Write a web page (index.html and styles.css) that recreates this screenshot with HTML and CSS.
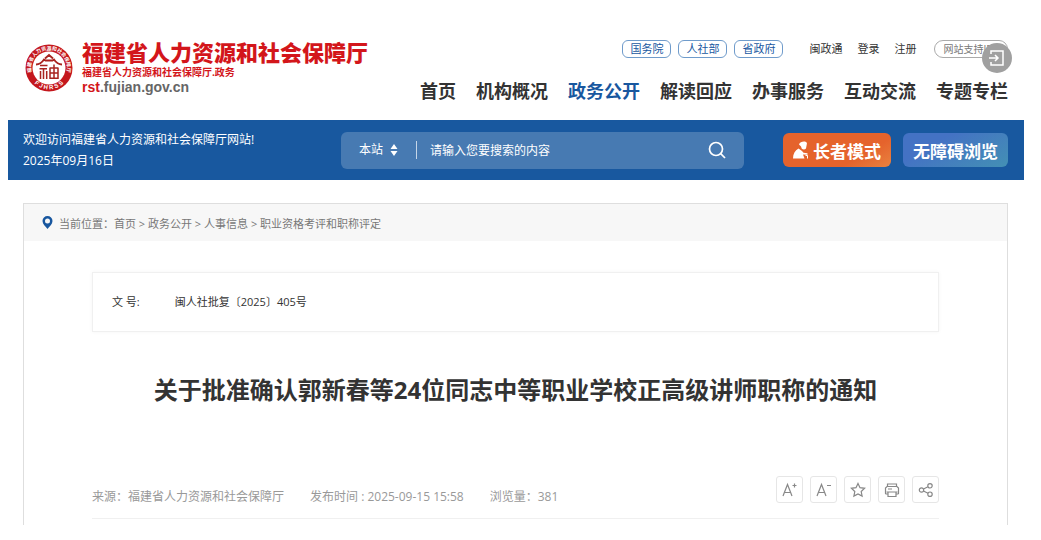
FILE: index.html
```html
<!DOCTYPE html>
<html lang="zh-CN">
<head>
    <meta charset="UTF-8">
    <meta name="viewport" content="width=device-width, initial-scale=1.0">
    <title>福建省人力资源和社会保障厅</title>
    <link rel="stylesheet" href="styles.css">
</head>
<body>

    <div class="page">
        <!-- Logo, quick links and main navigation -->
        <header class="header">
            <a class="logo" href="#">
                <svg class="seal" viewBox="0 0 48 48" aria-hidden="true">
                    <defs>
                        <path id="ring-top" d="M7.500 31 A18 18 0 1 1 40.500 31"/>
                        <path id="ring-bottom" d="M4.500 33 A21.600 21.600 0 0 0 43.500 33"/>
                    </defs>
                    <circle cx="24" cy="24" r="23.500" fill="#c4161c"/>
                    <circle cx="24" cy="24" r="16.500" fill="#fff"/>
                    <text class="seal-name"><textPath href="#ring-top" startOffset="50%" text-anchor="middle">福建省人力资源和社会保障厅</textPath></text>
                    <text class="seal-code"><textPath href="#ring-bottom" startOffset="50%" text-anchor="middle">F J H R S S</textPath></text>
                    <g fill="none" stroke="#a8231f">
                        <path stroke-width="1.800" d="M11 20.500c4 0 6-2 8-5l1.500 1h7L29 15.500c2 3 4 5 8 5M20 14.500l4-3.500 4 3.500"/>
                        <path stroke-width="1.500" d="M15 21.500h7.500M14.500 24.800H22M18.500 24.800V35M15.500 27V35M21.700 27v8M25 23.500v11.500M25 24h8M33 23.500v11.500M29 20.500v14M25 29h8M25 34.300h8"/>
                    </g>
                </svg>
                <span class="logo-text">
                    <span class="logo-name">福建省人力资源和社会保障厅</span>
                    <span class="logo-sub">福建省人力资源和社会保障厅.政务</span>
                    <span class="logo-url"><b>rst</b>.fujian.gov.cn</span>
                </span>
            </a>

            <div class="header-right">
                <div class="top-links">
                    <div class="pills">
                        <a class="pill" href="#">国务院</a>
                        <a class="pill" href="#">人社部</a>
                        <a class="pill" href="#">省政府</a>
                    </div>
                    <div class="account">
                        <a href="#">闽政通</a>
                        <a href="#">登录</a>
                        <a href="#">注册</a>
                    </div>
                    <div class="support">
                        <span class="ipv6">网站支持IPv6</span>
                        <button class="float-btn" type="button" aria-label="进入">
                            <svg viewBox="0 0 30 30" fill="none" stroke="#fff" stroke-width="1.500">
                                <path d="M9 11V8h12v14H9v-3M7 15h9M13 12l3 3-3 3"/>
                            </svg>
                        </button>
                    </div>
                </div>
                <nav class="nav">
                    <a href="#">首页</a>
                    <a href="#">机构概况</a>
                    <a class="active" href="#">政务公开</a>
                    <a href="#">解读回应</a>
                    <a href="#">办事服务</a>
                    <a href="#">互动交流</a>
                    <a href="#">专题专栏</a>
                </nav>
            </div>
        </header>

        <!-- Blue bar with search -->
        <div class="banner">
            <div class="welcome">
                <div>欢迎访问福建省人力资源和社会保障厅网站!</div>
                <div>2025年09月16日</div>
            </div>
            <form class="search">
                <div class="scope">
                    <select aria-label="搜索范围">
                        <option>本站</option>
                    </select>
                    <svg viewBox="0 0 8 12" fill="#fff" aria-hidden="true">
                        <path d="M4 0l3.500 5h-7zM4 12L.5 7h7z"/>
                    </svg>
                </div>
                <input type="text" placeholder="请输入您要搜索的内容" aria-label="搜索内容">
                <button type="submit" aria-label="搜索">
                    <svg viewBox="0 0 18 18" fill="none" stroke="#fff" stroke-width="1.700">
                        <circle cx="8" cy="8" r="6.500"/>
                        <path d="M12.700 12.700L17 17"/>
                    </svg>
                </button>
            </form>
            <div class="modes">
                <button class="mode elder" type="button">
                    <svg viewBox="0 0 16 18" fill="#fff" aria-hidden="true">
                        <path d="M6 3.500C7 1 10 .2 12.500.8c1.500.4 1.700 1.700 1.200 3L13 7.500c-1 1.200-3 1.200-4.200.2L8 5.500z"/>
                        <path d="M0 17.500c0-4.500 2-8 5.500-10L9 10l1.500 1.800 4 .4v1.600l-4.500-.3 1.500 4z"/>
                        <path d="M12.500 14.500h2v3" fill="none" stroke="#fff"/>
                    </svg>
                    长者模式
                </button>
                <button class="mode access" type="button">无障碍浏览</button>
            </div>
        </div>

        <!-- Article -->
        <main class="content">
            <div class="breadcrumb">
                <svg viewBox="0 0 10 13" aria-hidden="true">
                    <path fill="#18579f" fill-rule="evenodd" d="M5 0a5 5 0 0 1 5 5c0 3-3 5.500-5 8C3 10.500 0 8 0 5a5 5 0 0 1 5-5zm0 2.500a2.500 2.500 0 1 0 0 5 2.500 2.500 0 0 0 0-5z"/>
                </svg>
                <span>当前位置：<a href="#">首页</a> &gt; <a href="#">政务公开</a> &gt; <a href="#">人事信息</a> &gt; <a href="#">职业资格考评和职称评定</a></span>
            </div>
            <article class="article">
                <div class="doc-no">
                    <span class="doc-label">文 号:</span>
                    <span>闽人社批复〔2025〕405号</span>
                </div>
                <h1>关于批准确认郭新春等24位同志中等职业学校正高级讲师职称的通知</h1>
                <div class="meta">
                    <div class="meta-text">
                        <span>来源：福建省人力资源和社会保障厅</span>
                        <span>发布时间 : 2025-09-15 15:58</span>
                        <span>浏览量：381</span>
                    </div>
                    <div class="tools">
                        <button type="button" aria-label="放大字号">
                            <svg viewBox="0 0 18 18"><path d="M2 15L6.500 3.500 11 15M3.600 11.500h5.800M13.500 2.500v4M11.500 4.500h4"/></svg>
                        </button>
                        <button type="button" aria-label="缩小字号">
                            <svg viewBox="0 0 18 18"><path d="M2 15L6.500 3.500 11 15M3.600 11.500h5.800M12 4.500h4"/></svg>
                        </button>
                        <button type="button" aria-label="收藏">
                            <svg viewBox="0 0 18 18"><path d="M9 2.500l2 4.200 4.600.6-3.400 3.200.9 4.600L9 12.900l-4.100 2.200.9-4.600-3.400-3.200 4.600-.6z"/></svg>
                        </button>
                        <button type="button" aria-label="打印">
                            <svg viewBox="0 0 18 18"><path d="M4.500 5.500V3h9v2.500M4.500 13h-1.500l-.5-.5V7L4 5.500h10L15.500 7v5.500l-.5.500h-1.500M5 11h8v4.500H5zM3.500 11h11M5 8h4"/></svg>
                        </button>
                        <button type="button" aria-label="分享">
                            <svg viewBox="0 0 18 18"><circle cx="4.500" cy="9" r="2.200"/><circle cx="13" cy="4.800" r="2.200"/><circle cx="13" cy="13.200" r="2.200"/><path d="M6.500 8L11 5.800M6.500 10l4.500 2.200"/></svg>
                        </button>
                    </div>
                </div>
            </article>
        </main>
    </div>

</body>
</html>
```

FILE: styles.css
```css
/* General Styles */
* {
    box-sizing: border-box;
}

body {
    margin: 0;
    background-color: #fff;
    color: #333;
    font-family: "Open Sans", "Noto Sans CJK SC", sans-serif;
    font-size: 12px;
}

a {
    color: inherit;
    text-decoration: none;
}

button,
input,
select {
    font: inherit;
    color: inherit;
    border: none;
    background: none;
    padding: 0;
    margin: 0;
}

button {
    cursor: pointer;
}

svg {
    display: block;
    flex: none;
}

.page {
    margin: 0 17px 0 8px;
}

/* Header */
.header {
    display: flex;
    justify-content: space-between;
    padding: 40px 16px 16px 17px;
}

.logo {
    display: flex;
    gap: 9px;
    white-space: nowrap;
}

.seal {
    width: 48px;
    height: 48px;
    margin-top: 4px;
}

.seal-name {
    font-size: 5px;
    font-weight: bold;
    fill: #fff;
}

.seal-code {
    font-family: "Liberation Sans", sans-serif;
    font-size: 6px;
    font-weight: bold;
    fill: #fff;
}

.logo-text {
    display: flex;
    flex-direction: column;
    color: #d3161b;
}

.logo-name {
    font-size: 22px;
    font-weight: 900;
    line-height: 24px;
}

.logo-sub {
    font-size: 10px;
    font-weight: bold;
    line-height: 16px;
}

.logo-url {
    font-family: "Liberation Sans", sans-serif;
    font-size: 14px;
    font-weight: bold;
    line-height: 14px;
    color: #666;
}

.logo-url b {
    color: #d3161b;
}

.header-right {
    display: flex;
    flex-direction: column;
    align-items: flex-end;
    gap: 20px;
    white-space: nowrap;
}

.top-links {
    display: flex;
    font-size: 11px;
    line-height: 16px;
}

.pills {
    display: flex;
    gap: 7px;
}

.pill {
    padding: 0 7px;
    border: 1px solid #6f9bcb;
    border-radius: 6px;
    color: #18579f;
}

.account {
    display: flex;
    gap: 15px;
    padding: 1px 18px 0 26px;
}

.support {
    position: relative;
}

.ipv6 {
    display: block;
    padding: 0 4px 0 8px;
    border: 1px solid #aaa;
    border-radius: 9px;
    font-size: 10px;
    color: #777;
}

.float-btn {
    position: absolute;
    top: 3px;
    right: -4px;
    width: 30px;
    height: 30px;
    border-radius: 50%;
    background-color: #a0a0a0;
}

.nav {
    display: flex;
    gap: 20px;
    font-size: 18px;
    font-weight: bold;
    line-height: 26px;
}

.nav .active {
    color: #18579f;
}

/* Blue bar */
.banner {
    display: flex;
    align-items: center;
    justify-content: space-between;
    height: 60px;
    padding: 0 16px 0 15px;
    background-color: #18589f;
    color: #fff;
    white-space: nowrap;
}

.welcome {
    line-height: 21px;
}

.search {
    display: flex;
    align-items: center;
    flex: 0 1 403px;
    height: 37px;
    margin-left: 48px;
    padding: 0 18px;
    border-radius: 6px;
    background-color: #477ab2;
}

.scope {
    display: flex;
    align-items: center;
    gap: 6px;
    padding-right: 18px;
    border-right: 1px solid #c5d6e8;
}

.scope select {
    appearance: none;
    line-height: 18px;
}

.scope svg {
    width: 8px;
    height: 12px;
}

.search input {
    flex: 1;
    min-width: 0;
    padding-left: 13px;
    outline: none;
}

.search input::placeholder {
    color: #fff;
    opacity: 1;
}

.search button svg {
    width: 18px;
    height: 18px;
}

.modes {
    display: flex;
    gap: 12px;
}

.mode {
    display: flex;
    align-items: center;
    gap: 4px;
    height: 34px;
    padding: 0 10px;
    border-radius: 6px;
    font-size: 17px;
    font-weight: bold;
}

.mode svg {
    width: 16px;
    height: 18px;
}

.elder {
    background: linear-gradient(150deg, #e5632c 70%, #e98240);
}

.access {
    background: linear-gradient(150deg, #4472c4 30%, #4390b4);
}

/* Article */
.content {
    margin: 23px 16px 0 15px;
    border: 1px solid #dedede;
    border-bottom: none;
}

.breadcrumb {
    display: flex;
    align-items: center;
    gap: 6px;
    height: 37px;
    padding: 0 18px;
    background-color: #f7f7f7;
    color: #777;
    font-size: 11px;
}

.breadcrumb svg {
    width: 11px;
    height: 13px;
}

.article {
    padding: 31px 68px 6px;
}

.doc-no {
    display: flex;
    gap: 35px;
    padding: 20px 19px;
    border: 1px solid #f0f0f0;
    box-shadow: 0 0 4px #f5f5f5;
    font-size: 11px;
    line-height: 18px;
}

h1 {
    margin: 40px 0 68px;
    font-size: 24px;
    line-height: 36px;
    text-align: center;
}

.meta {
    display: flex;
    justify-content: space-between;
    padding-bottom: 12px;
    border-bottom: 1px solid #f0f0f0;
    color: #999;
}

.meta-text {
    display: flex;
    gap: 26px;
    padding-top: 12px;
    line-height: 18px;
}

.tools {
    display: flex;
    gap: 7px;
}

.tools button {
    display: flex;
    align-items: center;
    justify-content: center;
    width: 27px;
    height: 27px;
    border: 1px solid #e6e6e6;
    border-radius: 3px;
}

.tools svg {
    width: 18px;
    height: 18px;
    fill: none;
    stroke: #888;
    stroke-width: 1.2;
}
```
